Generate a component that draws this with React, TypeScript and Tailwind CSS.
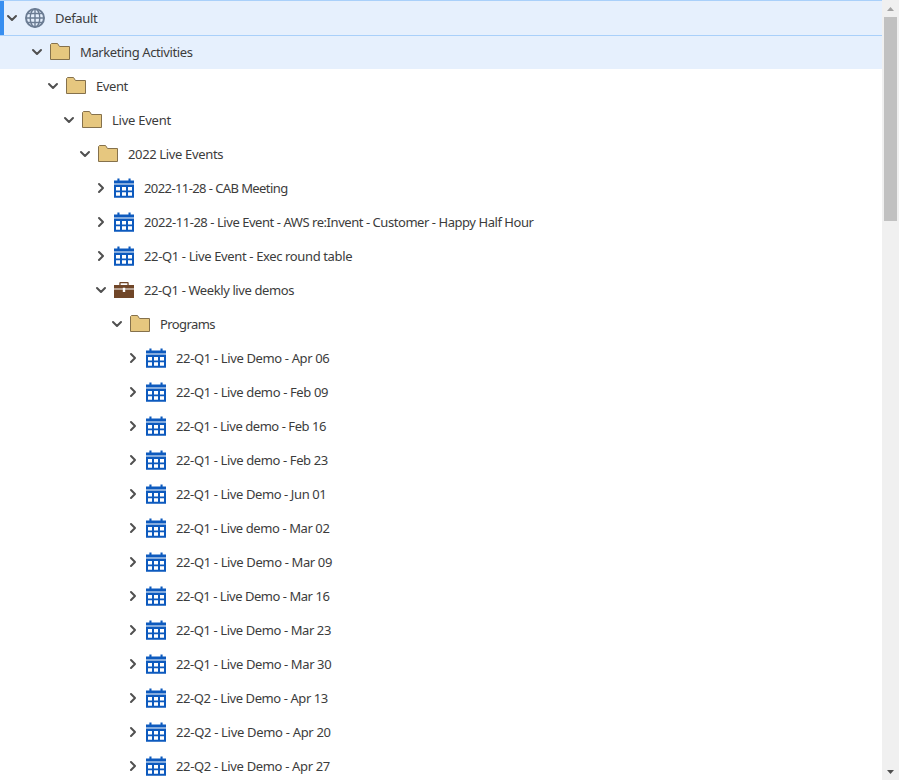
import React from "react";

type Kind = "globe" | "folder" | "calendar" | "case";

interface Item {
  label: string;
  level: number;
  kind: Kind;
  open?: boolean;
  tracking: string;
}

const demos: [string, string][] = [
  ["22-Q1 - Live Demo - Apr 06", "tracking-[-0.36px]"],
  ["22-Q1 - Live demo - Feb 09", "tracking-[-0.37px]"],
  ["22-Q1 - Live demo - Feb 16", "tracking-[-0.45px]"],
  ["22-Q1 - Live demo - Feb 23", "tracking-[-0.38px]"],
  ["22-Q1 - Live Demo - Jun 01", "tracking-[-0.4px]"],
  ["22-Q1 - Live demo - Mar 02", "tracking-[-0.41px]"],
  ["22-Q1 - Live Demo - Mar 09", "tracking-[-0.37px]"],
  ["22-Q1 - Live Demo - Mar 16", "tracking-[-0.47px]"],
  ["22-Q1 - Live Demo - Mar 23", "tracking-[-0.41px]"],
  ["22-Q1 - Live Demo - Mar 30", "tracking-[-0.4px]"],
  ["22-Q2 - Live Demo - Apr 13", "tracking-[-0.42px]"],
  ["22-Q2 - Live Demo - Apr 20", "tracking-[-0.31px]"],
  ["22-Q2 - Live Demo - Apr 27", "tracking-[-0.34px]"],
];

const items: Item[] = [
  { label: "Marketing Activities", level: 0, kind: "folder", open: true, tracking: "tracking-[-0.39px]" },
  { label: "Event", level: 1, kind: "folder", open: true, tracking: "tracking-[-0.4px]" },
  { label: "Live Event", level: 2, kind: "folder", open: true, tracking: "tracking-[-0.25px]" },
  { label: "2022 Live Events", level: 3, kind: "folder", open: true, tracking: "tracking-[-0.35px]" },
  { label: "2022-11-28 - CAB Meeting", level: 4, kind: "calendar", tracking: "tracking-[-0.59px]" },
  { label: "2022-11-28 - Live Event - AWS re:Invent - Customer - Happy Half Hour", level: 4, kind: "calendar", tracking: "tracking-[-0.45px]" },
  { label: "22-Q1 - Live Event - Exec round table", level: 4, kind: "calendar", tracking: "tracking-[-0.37px]" },
  { label: "22-Q1 - Weekly live demos", level: 4, kind: "case", open: true, tracking: "tracking-[-0.4px]" },
  { label: "Programs", level: 5, kind: "folder", open: true, tracking: "tracking-[-0.6px]" },
  ...demos.map(([label, tracking]): Item => ({ label, tracking, level: 6, kind: "calendar" })),
];

function Chevron({ open }: { open?: boolean }) {
  return (
    <svg className="h-3 w-3 shrink-0" viewBox="0 0 12 12" fill="none" stroke="#505050" strokeWidth="2" strokeLinecap="round" strokeLinejoin="round">
      <path d={open ? "M2 4L6 8L10 4" : "M4 2L8 6L4 10"} />
    </svg>
  );
}

function Icon({ kind }: { kind: Kind }) {
  if (kind === "globe")
    return (
      <svg className="h-5 w-5 shrink-0" viewBox="0 0 20 20" fill="none" stroke="#6b7c93" strokeWidth="1.4">
        <circle cx="10" cy="10" r="9" strokeWidth="2" />
        <ellipse cx="10" cy="10" rx="4.8" ry="9" />
        <path d="M10 1V19M1 10H19M2.5 5.5H17.5M2.5 14.5H17.5" />
      </svg>
    );
  if (kind === "folder")
    return (
      <svg className="h-5 w-5 shrink-0" viewBox="0 0 20 20" fill="#e6c77f" stroke="#85714c">
        <path d="M.5 17.5V2.5L1.5 1.5H7.5L9.5 4.5H19.5V17.5Z" />
      </svg>
    );
  if (kind === "case")
    return (
      <svg className="h-5 w-5 shrink-0" viewBox="0 0 20 20" fill="#704628">
        <path d="M5.3 5V3Q5.3 2 6.3 2H13.7Q14.7 2 14.7 3V5H13.4V3.3H6.6V5Z" />
        <path d="M0 5H20V8.4H11.2V7.8H8.8V8.4H0ZM0 9.6H8.8V12H11.2V9.6H20V18H0Z" />
      </svg>
    );
  return (
    <svg className="h-5 w-5 shrink-0" viewBox="0 0 20 20" fill="#0d5abe">
      <path d="M3.4 .5H5.5V2.5H14.5V.5H16.6V2.5H20V5.5H0V2.5H3.4Z" />
      <path fillRule="evenodd" d="M0 6.6H20V19.7H0ZM2 9V12.5H6V9ZM8 9V12.5H12V9ZM14 9V12.5H18V9ZM2 14.2V17.7H6V14.2ZM8 14.2V17.7H12V14.2ZM14 14.2V17.7H18V14.2Z" />
    </svg>
  );
}

const indents = ["pl-[31px]", "pl-[47px]", "pl-[63px]", "pl-[79px]", "pl-[95px]", "pl-[111px]", "pl-[127px]"];

function Row({ item }: { item: Item }) {
  return (
    <div className={`flex items-center ${indents[item.level]} ${item.level === 0 ? "h-[33px] bg-[#e6f0fd] pb-px" : "h-[34px]"}`}>
      <Chevron open={item.open} />
      <span className="ml-[7px] flex"><Icon kind={item.kind} /></span>
      <span className={`ml-[10px] whitespace-nowrap pt-[2px] ${item.tracking}`}>{item.label}</span>
    </div>
  );
}

export default function App() {
  return (
    <div className="flex h-[780px] w-[899px] overflow-hidden bg-white font-['Noto_Sans',sans-serif] text-[13px] text-[#3c3c3c]">
      <main className="h-full min-w-0 flex-1 overflow-hidden">
        <div className="flex h-9 items-center border-y border-[#a9d0fa] bg-[#e6f0fd]">
          <div className="h-full w-1 bg-[#378ef0]" />
          <span className="ml-[2px] flex"><Chevron open /></span>
          <span className="ml-[7px] flex"><Icon kind="globe" /></span>
          <span className="ml-[10px] pt-[2px] tracking-[-0.34px]">Default</span>
        </div>
        <div>
          {items.map((item) => <Row key={item.label} item={item} />)}
        </div>
      </main>
      <aside className="flex w-[17px] flex-col items-center bg-[#f0f0f0]">
        <div className="flex h-[17px] items-center">
          <svg className="h-1 w-[7px]" viewBox="0 0 7 4" fill="#a3a3a3"><path d="M0 4L3.5 0L7 4Z" /></svg>
        </div>
        <div className="h-[204px] w-[13px] bg-[#c1c1c1]" />
        <div className="mt-auto flex h-[17px] items-center">
          <svg className="h-1 w-[7px]" viewBox="0 0 7 4" fill="#505050"><path d="M0 0L3.5 4L7 0Z" /></svg>
        </div>
      </aside>
    </div>
  );
}
